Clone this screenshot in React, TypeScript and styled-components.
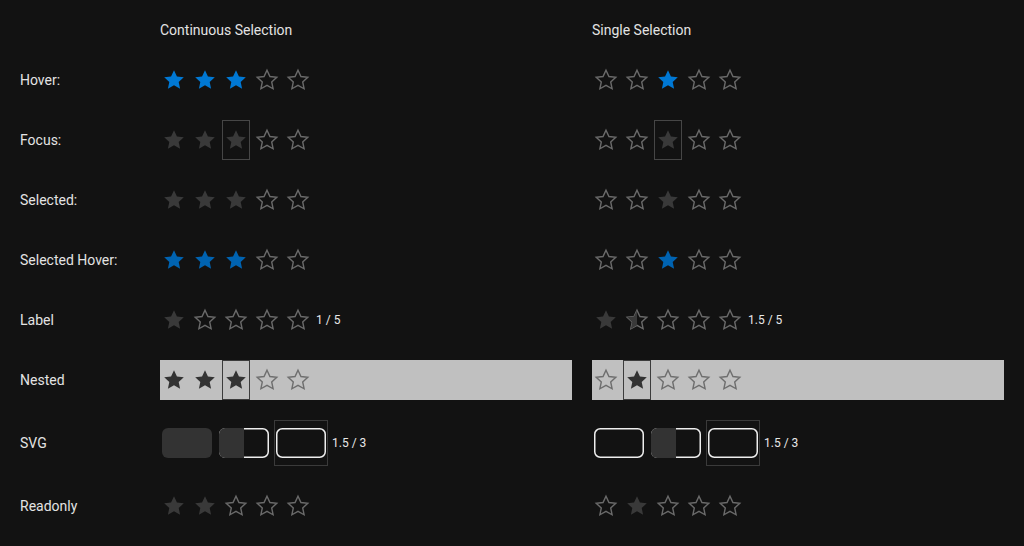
import styled, { createGlobalStyle } from 'styled-components';

const GlobalStyle = createGlobalStyle`
  html, body {
    margin: 0;
    padding: 0;
    background: #121212;
  }
  body {
    font-family: Roboto, "Liberation Sans", sans-serif;
    color: #e3e3e3;
  }
`;

const Page = styled.div`
  display: grid;
  grid-template-columns: 120px 412px 412px;
  align-content: start;
  column-gap: 20px;
  padding: 20px 20px 0;
  width: 1024px;
  height: 546px;
  box-sizing: border-box;
  overflow: hidden;
`;

const Heading = styled.div`
  font-size: 14px;
  line-height: 20px;
  height: 30px;
  color: #e3e3e3;
`;

const RowLabel = styled.div`
  display: flex;
  align-items: center;
  font-size: 14px;
  padding: 10px 0;
`;

const Cell = styled.div`
  display: flex;
  align-items: center;
  padding: 10px 0;
`;

const Rating = styled.div<{ $nested?: boolean }>`
  display: flex;
  align-items: center;
  gap: 3px;
  flex: ${(p) => (p.$nested ? 1 : 'none')};
  height: 40px;
  background: ${(p) => (p.$nested ? '#c0c0c0' : 'transparent')};
`;

const StarItem = styled.span<{ $focus?: boolean; $nested?: boolean }>`
  display: inline-flex;
  align-items: center;
  justify-content: center;
  width: 28px;
  height: 40px;
  box-sizing: border-box;
  border: 1px solid
    ${(p) => (p.$focus ? (p.$nested ? '#3c3c3c' : '#464646') : 'transparent')};
`;

const ShapeItem = styled.span<{ $focus?: boolean }>`
  display: inline-flex;
  align-items: center;
  justify-content: center;
  width: 54px;
  height: 46px;
  box-sizing: border-box;
  border: 1px solid ${(p) => (p.$focus ? '#3a3a3a' : 'transparent')};
`;

const ShapeRow = styled.div`
  display: flex;
  align-items: center;
  gap: 3px;
`;

const ValueText = styled.span`
  margin-left: 1px;
  font-size: 12px;
  color: #e8e8e8;
`;

type StarState = 'hover' | 'selhover' | 'filled' | 'empty' | 'half';

const STAR =
  'M12 2.2l2.95 6.3 6.85.78-5.1 4.66 1.4 6.8L12 17.3l-6.1 3.44 1.4-6.8-5.1-4.66 6.85-.78z';

const fillFor = (s: StarState, nested?: boolean) => {
  if (s === 'hover') return '#0078d4';
  if (s === 'selhover') return '#0063b1';
  return nested ? '#333333' : '#393939';
};

function Star({ state, nested, id }: { state: StarState; nested?: boolean; id: string }) {
  const outline = nested ? '#6e6e6e' : '#6a6a6a';
  return (
    <svg width="24" height="24" viewBox="0 0 24 24">
      {state === 'empty' || state === 'half' ? (
        <path d={STAR} fill="none" stroke={outline} strokeWidth="1.4" strokeLinejoin="miter" />
      ) : (
        <path d={STAR} fill={fillFor(state, nested)} />
      )}
      {state === 'half' && (
        <>
          <clipPath id={id}>
            <rect x="0" y="0" width="12" height="24" />
          </clipPath>
          <path d={STAR} fill={fillFor('filled', nested)} clipPath={`url(#${id})`} />
        </>
      )}
    </svg>
  );
}

function Stars({
  states,
  focus,
  nested,
  label,
  name,
}: {
  states: StarState[];
  focus?: number;
  nested?: boolean;
  label?: string;
  name: string;
}) {
  return (
    <Rating $nested={nested}>
      {states.map((s, i) => (
        <StarItem key={i} $focus={focus === i} $nested={nested}>
          <Star state={s} nested={nested} id={`${name}-${i}`} />
        </StarItem>
      ))}
      {label && <ValueText>{label}</ValueText>}
    </Rating>
  );
}

type ShapeState = 'filled' | 'half' | 'empty';

function Shape({ state, id }: { state: ShapeState; id: string }) {
  return (
    <svg width="52" height="32" viewBox="0 0 52 32">
      {state === 'filled' ? (
        <rect x="1" y="1" width="50" height="30" rx="6" fill="#333333" />
      ) : (
        <rect x="1.75" y="1.75" width="48.5" height="28.5" rx="5.5" fill="none" stroke="#eeeeee" strokeWidth="1.5" />
      )}
      {state === 'half' && (
        <>
          <clipPath id={id}>
            <rect x="0" y="0" width="26" height="32" />
          </clipPath>
          <rect x="1" y="1" width="50" height="30" rx="6" fill="#333333" clipPath={`url(#${id})`} />
        </>
      )}
    </svg>
  );
}

function Shapes({ states, focus, name }: { states: ShapeState[]; focus: number; name: string }) {
  return (
    <ShapeRow>
      {states.map((s, i) => (
        <ShapeItem key={i} $focus={focus === i}>
          <Shape state={s} id={`${name}-${i}`} />
        </ShapeItem>
      ))}
      <ValueText>1.5 / 3</ValueText>
    </ShapeRow>
  );
}

const E: StarState = 'empty';
const F: StarState = 'filled';

export default function App() {
  return (
    <>
      <GlobalStyle />
      <Page>
        <div />
        <Heading>Continuous Selection</Heading>
        <Heading>Single Selection</Heading>

        <RowLabel>Hover:</RowLabel>
        <Cell><Stars name="h1" states={['hover', 'hover', 'hover', E, E]} /></Cell>
        <Cell><Stars name="h2" states={[E, E, 'hover', E, E]} /></Cell>

        <RowLabel>Focus:</RowLabel>
        <Cell><Stars name="f1" states={[F, F, F, E, E]} focus={2} /></Cell>
        <Cell><Stars name="f2" states={[E, E, F, E, E]} focus={2} /></Cell>

        <RowLabel>Selected:</RowLabel>
        <Cell><Stars name="s1" states={[F, F, F, E, E]} /></Cell>
        <Cell><Stars name="s2" states={[E, E, F, E, E]} /></Cell>

        <RowLabel>Selected Hover:</RowLabel>
        <Cell><Stars name="sh1" states={['selhover', 'selhover', 'selhover', E, E]} /></Cell>
        <Cell><Stars name="sh2" states={[E, E, 'selhover', E, E]} /></Cell>

        <RowLabel>Label</RowLabel>
        <Cell><Stars name="l1" states={[F, E, E, E, E]} label="1 / 5" /></Cell>
        <Cell><Stars name="l2" states={[F, 'half', E, E, E]} label="1.5 / 5" /></Cell>

        <RowLabel>Nested</RowLabel>
        <Cell><Stars name="n1" nested states={[F, F, F, E, E]} focus={2} /></Cell>
        <Cell><Stars name="n2" nested states={[E, F, E, E, E]} focus={1} /></Cell>

        <RowLabel>SVG</RowLabel>
        <Cell><Shapes name="v1" states={['filled', 'half', 'empty']} focus={2} /></Cell>
        <Cell><Shapes name="v2" states={['empty', 'half', 'empty']} focus={2} /></Cell>

        <RowLabel>Readonly</RowLabel>
        <Cell><Stars name="r1" states={[F, F, E, E, E]} /></Cell>
        <Cell><Stars name="r2" states={[E, F, E, E, E]} /></Cell>
      </Page>
    </>
  );
}
